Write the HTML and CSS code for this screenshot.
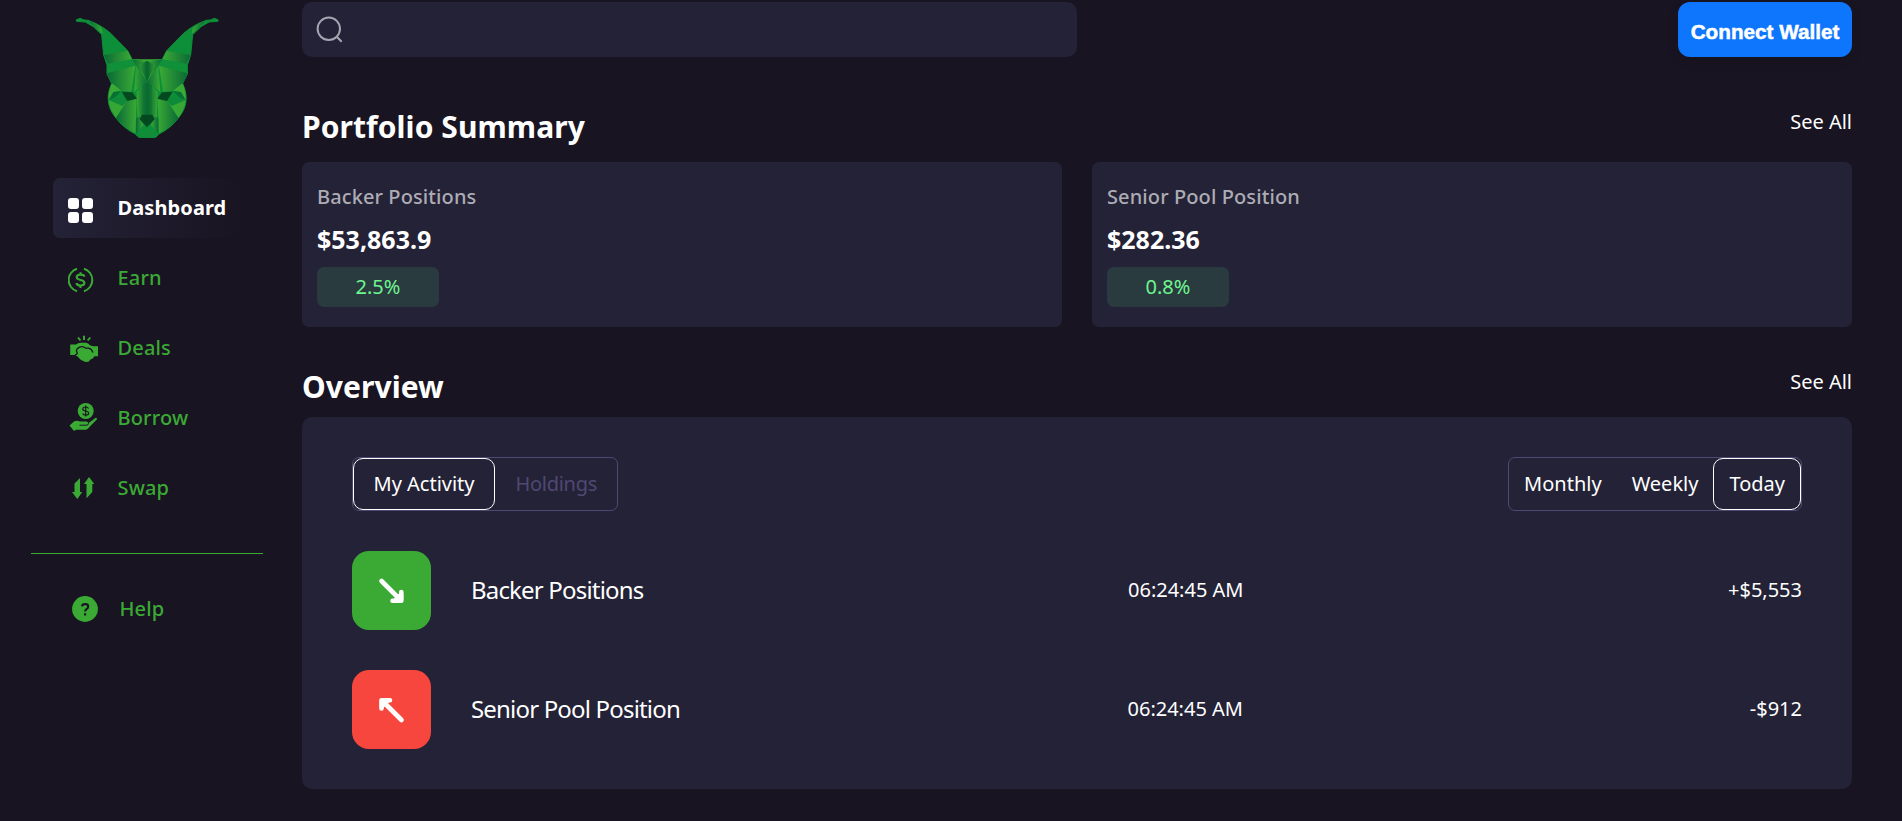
FILE: index.html
```html
<!DOCTYPE html>
<html lang="en">
<head>
<meta charset="utf-8">
<title>Dashboard</title>
<link rel="stylesheet" href="styles.css">
</head>
<body>
<div class="app">
  <aside class="sidebar">
    <svg class="logo" viewBox="0 0 540 450" width="180" height="150" aria-hidden="true">
      <defs>
        <linearGradient id="a" x1="0" x2="1"><stop offset="0" stop-color="#0a6a36"/><stop offset="1" stop-color="#3aaa35"/></linearGradient>
        <linearGradient id="b" x1="0" x2="1"><stop offset="0" stop-color="#3aaa35"/><stop offset="1" stop-color="#0a6a36"/></linearGradient>
        <linearGradient id="c" x1="0" x2="1"><stop offset="0" stop-color="#2f9c35"/><stop offset=".5" stop-color="#07632f"/><stop offset="1" stop-color="#2f9c35"/></linearGradient>
        <g id="half">
          <path fill="#0c8f38" stroke="#0c8f38" stroke-width="3" d="M48 60L60 55L72 60L84 61Q122 74 152 100L203 152L216 178L262 184V412H236L226 402Q190 384 168 354C148 330 143 308 145 285Q147 268 155 250L141 222V195L131 165L125 104L100 80L76 66L50 64Z"/>
          <path fill="url(#a)" d="M90 64Q108 67 125 84L128 102Q108 84 90 66Z"/>
          <path fill="url(#a)" d="M131 165L203 152L216 178L145 192Z"/>
          <path fill="#109039" d="M145 192L216 178L228 197L141 220Z"/>
          <path fill="url(#a)" d="M141 220L226 197L214 275L185 272L153 250Z"/>
          <path fill="#3aaa35" d="M216 178H262V184L240 202Z"/>
          <path fill="url(#b)" d="M228 197L262 245L222 276Z"/>
          <path fill="url(#a)" d="M216 178L262 245V184Z"/>
          <path fill="#3aaa35" d="M156 250L184 272L146 300Q144 275 156 250Z"/>
          <path fill="#087034" d="M184 272L166 292L146 300L160 276Z"/>
          <path fill="#36a635" d="M146 300L202 302L168 354Q147 325 146 300Z"/>
          <path fill="#0f8a38" d="M146 300L190 290L202 303L188 318Z"/>
          <path fill="url(#a)" d="M202 302L230 294L226 400Q190 382 168 354Z"/>
          <path fill="url(#b)" d="M230 276L262 245V344H246L234 390Z"/>
          <path fill="#087034" d="M247 258L262 245V344H247Z"/>
          <path fill="url(#a)" d="M240 348L250 376L228 402V355Z"/>
          <path fill="#04481f" d="M185 275L217 277L231 296L202 303Z"/>
          <path fill="#118c38" d="M236 404L262 380V413H238Z"/>
        </g>
      </defs>
      <use href="#half"/>
      <use href="#half" transform="matrix(-1 0 0 1 523 0)"/>
      <path fill="url(#c)" d="M238 196L261 182L285 196L261 245Z"/>
      <path fill="url(#c)" d="M232 280L261 246L291 280L285 345H239Z" opacity=".7"/>
      <path fill="#04481f" d="M246 344H277L284 358L261 382L239 358Z"/>
    </svg>
    <nav class="nav">
      <a class="item active">
        <svg class="icon" width="30" height="36" viewBox="0 0 30 36" fill="#fff"><rect x="0" y="8" width="11" height="11" rx="3"/><rect x="14" y="8" width="11" height="11" rx="3"/><rect x="0" y="22" width="11" height="11" rx="3"/><rect x="14" y="22" width="11" height="11" rx="3"/></svg>
        <span>Dashboard</span>
      </a>
      <a class="item">
        <svg class="icon" width="30" height="30" viewBox="0 -4 30 30" fill="none" stroke="#3aaa35" stroke-width="2"><path d="M9 1.8A11.7 11.7 0 0 0 9 24.2M16 1.8A11.7 11.7 0 0 1 16 24.2"/><path d="M16.4 9.6Q16 7.6 12.5 7.6Q8.7 7.6 8.7 10.1Q8.7 12.3 12.5 13Q16.4 13.7 16.4 16Q16.4 18.5 12.5 18.5Q8.8 18.5 8.5 16M12.5 5.2V7.6M12.5 18.5V21" stroke-width="2.1"/></svg>
        <span>Earn</span>
      </a>
      <a class="item">
        <svg class="icon" width="30" height="30" viewBox="0 0 30 30" fill="#3aaa35"><path d="M2.2 11.5H8Q10 9.6 13 9.7H18Q20 9.8 22 12.2L25 13.2H30V23.3H26.5Q25.5 25.5 22.5 26.5L20.5 28.8L17.5 29L13 27L9 23L7 22H2.2Z"/><path d="M7 21.5Q8.5 22 9.5 20.5M9.5 20.5Q7.5 17.5 9.5 15.5Q12 13 15.5 13.8L17.5 15.2H20.5Q23.5 16 25 19.5" fill="none" stroke="#191421" stroke-width="1.3"/><path d="M10 4.5L12.5 7.5M16 2.7V7M22.3 4.5L19.7 7.5" stroke="#3aaa35" stroke-width="1.9"/></svg>
        <span>Deals</span>
      </a>
      <a class="item">
        <svg class="icon" width="30" height="30" viewBox="0 0 30 30" fill="#3aaa35"><circle cx="17.7" cy="8" r="8"/><path d="M20.6 5.6Q19.8 4 17.7 4Q14.8 4 14.8 6Q14.8 7.6 17.7 8Q20.7 8.5 20.7 10.2Q20.7 12.1 17.7 12.1Q15.2 12.1 14.7 10.3M17.7 2.6V13.5" fill="none" stroke="#191421" stroke-width="1.2"/><path d="M1.5 22.5L6 18.5Q9 17 12 18.6H18.5Q20.5 19 20 20.6L27.3 15Q29 14.3 29 16.2L19.5 26Q18.8 26.8 17.5 26.8H8L6 28Z"/><path d="M11.5 22.2H19L21 20.4" fill="none" stroke="#191421" stroke-width="1"/></svg>
        <span>Borrow</span>
      </a>
      <a class="item">
        <svg class="icon" width="30" height="30" viewBox="0 0 30 30" fill="#3aaa35"><path d="M12 5V19H14.3L9.3 26L4 19H6.5V10.5Z"/><path d="M21 4L26.3 11H24.3V19L18.5 25.3V11H16Z"/></svg>
        <span>Swap</span>
      </a>
    </nav>
    <hr class="divider">
    <a class="item help">
      <svg class="icon" width="30" height="30" viewBox="0 0 30 30"><circle cx="15" cy="15" r="12.9" fill="#3aaa35"/><path d="M12 12.3Q12.2 10.1 15.2 10.1Q18.2 10.1 18.2 12.5Q18.2 14 16.5 15.1Q15.1 16 15.1 17.5M15.1 19.2V21.4" fill="none" stroke="#191421" stroke-width="2.1"/></svg>
      <span>Help</span>
    </a>
  </aside>

  <main class="main">
    <header class="topbar">
      <div class="search">
        <svg width="27" height="27" viewBox="0 0 27 27" fill="none" stroke="#a6a5b0" stroke-width="2"><circle cx="12.8" cy="12.8" r="11.2"/><path d="M20.5 20.5L25.7 25.7"/></svg>
      </div>
      <button class="connect">Connect Wallet</button>
    </header>

    <div class="section-head"><h2>Portfolio Summary</h2><a>See All</a></div>
    <section class="cards">
      <article class="card"><h3>Backer Positions</h3><strong>$53,863.9</strong><span class="badge">2.5%</span></article>
      <article class="card"><h3>Senior Pool Position</h3><strong>$282.36</strong><span class="badge">0.8%</span></article>
    </section>

    <div class="section-head overview-head"><h2>Overview</h2><a>See All</a></div>
    <section class="panel">
      <div class="filters">
        <div class="toggle views"><span class="selected">My Activity</span><span class="muted">Holdings</span></div>
        <div class="toggle periods"><span>Monthly</span><span>Weekly</span><span class="selected">Today</span></div>
      </div>
      <div class="row">
        <div class="arrow in"><svg width="79" height="79" viewBox="0 0 79 79" fill="none" stroke="#fff" stroke-width="4.6" stroke-linecap="round" stroke-linejoin="round"><path d="M29.5 30L49 49.5M49.3 41V49.8H40.5"/><path d="M44 49L49 44V49Z"/></svg></div>
        <span class="name">Backer Positions</span><time>06:24:45 AM</time><span class="amount">+$5,553</span>
      </div>
      <div class="row">
        <div class="arrow out"><svg width="79" height="79" viewBox="0 0 79 79" fill="none" stroke="#fff" stroke-width="4.6" stroke-linecap="round" stroke-linejoin="round"><path d="M49.5 50L30 30.5M29.5 38.5V30.2H38"/><path d="M35 31L30 36V31Z"/></svg></div>
        <span class="name">Senior Pool Position</span><time>06:24:45 AM</time><span class="amount">-$912</span>
      </div>
    </section>
  </main>
</div>
</body>
</html>
```
FILE: styles.css
```css
* { box-sizing: border-box; margin: 0; padding: 0; }
body { height: 821px; overflow: hidden; background: #191421; color: #fff; font: 20px/30px "Noto Sans", sans-serif; }
.app { display: flex; height: 821px; }
.sidebar { width: 302px; flex: none; }
.logo { display: block; margin-left: 60px; }
.nav { display: flex; flex-direction: column; gap: 10px; margin: 28px 50px 0 53px; }
.item { display: flex; align-items: center; height: 60px; padding-left: 15px; gap: 19.5px; color: #3aaa35; font-weight: 500; letter-spacing: .15px; border-radius: 7px; }
.item .icon { flex: none; }
.item.active { color: #fff; font-weight: 700; letter-spacing: .1px; background: linear-gradient(90deg, #242237, #191421 95%); }
.divider { width: 232px; height: 1px; margin: 35px 0 0 31px; border: 0; background: #3aaa35; }
.help { margin: 25px 0 0 55px; }

.main { width: 1550px; padding-top: 2px; }
.topbar { display: flex; justify-content: space-between; height: 55px; }
.search { display: flex; align-items: center; width: 775px; padding-left: 14px; border-radius: 10px; background: #242237; }
.connect { width: 174px; padding-top: 5px; border: 0; border-radius: 12px; background: #0e76fd; color: #fff; font: 700 20.7px "Liberation Sans", Arial, sans-serif; -webkit-text-stroke: .5px #fff; white-space: nowrap; box-shadow: 0 4px 12px rgba(0, 0, 0, .1); }
.section-head { display: flex; justify-content: space-between; margin-top: 50px; height: 40px; }
.section-head h2 { font-size: 30px; line-height: 40px; font-weight: 700; letter-spacing: .07px; }
.section-head + .cards { margin-top: 15px; }
.cards { display: grid; grid-template-columns: 1fr 1fr; gap: 30px; }
.card { display: flex; flex-direction: column; align-items: flex-start; height: 165px; padding: 20px 15px; border-radius: 7px; background: #242237; }
.card h3 { font-size: 20px; font-weight: 500; letter-spacing: .1px; color: #adacb4; }
.card strong { margin-top: 10px; font-size: 25px; line-height: 35px; }
.badge { width: 122px; height: 40px; margin-top: 10px; border-radius: 7px; background: #293b3f; color: #6ff58f; line-height: 40px; text-align: center; }
.overview-head { margin-top: 40px; }
.panel { height: 372px; margin-top: 10px; padding: 40px 50px; border-radius: 10px; background: #242237; }
.filters { display: flex; justify-content: space-between; }
.toggle { display: flex; height: 54px; border: 1px solid #4f4872; border-radius: 7px; }
.toggle span { height: 52px; padding: 0 14px; border: 1px solid transparent; border-radius: 10px; line-height: 50px; }
.toggle .selected { border-color: #fff; }
.toggle .muted { color: #4f4872; letter-spacing: -.3px; }
.toggle.views span { padding: 0 19.5px; }
.toggle.periods .selected { padding: 0 15px; }
.row { display: grid; grid-template-columns: 119px 657px 1fr auto; align-items: center; margin-top: 40px; }
.row + .row time { margin-left: -.5px; }
.row .amount { text-align: right; }
.row time, .row .amount { padding-bottom: 2px; }
.name { padding-bottom: 2px; font-size: 24px; letter-spacing: -.82px; }
.arrow { width: 79px; height: 79px; border-radius: 17px; }
.arrow svg { display: block; }
.in { background: #3aaa35; }
.out { background: #f7463d; }
```
